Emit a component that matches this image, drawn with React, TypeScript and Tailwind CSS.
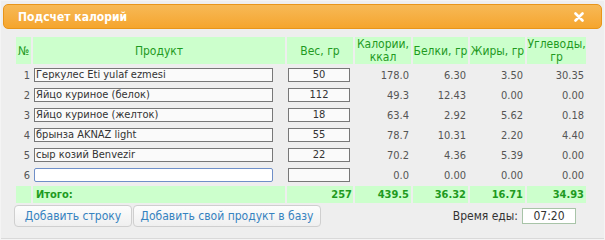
import React from 'react';

const rows = [
  { n: 1, name: 'Геркулес Eti yulaf ezmesi', w: '50', kcal: '178.0', p: '6.30', f: '3.50', c: '30.35' },
  { n: 2, name: 'Яйцо куриное (белок)', w: '112', kcal: '49.3', p: '12.43', f: '0.00', c: '0.00' },
  { n: 3, name: 'Яйцо куриное (желток)', w: '18', kcal: '63.4', p: '2.92', f: '5.62', c: '0.18' },
  { n: 4, name: 'брынза AKNAZ light', w: '55', kcal: '78.7', p: '10.31', f: '2.20', c: '4.40' },
  { n: 5, name: 'сыр козий Benvezir', w: '22', kcal: '70.2', p: '4.36', f: '5.39', c: '0.00' },
  { n: 6, name: '', w: '', kcal: '0.0', p: '0.00', f: '0.00', c: '0.00' },
];

const font = { fontFamily: '"DejaVu Sans", sans-serif', fontStretch: 'condensed' } as React.CSSProperties;

export default function App() {
  return (
    <div className="w-[605px] h-[240px] bg-[#f4f4f4] pt-[1px] overflow-hidden" style={font}>
      <div className="mx-[1px] h-[238px] border-b border-[#d9d9d9] bg-[#eeeeee] px-[2px] pt-[3px]">
        {/* title bar */}
        <div className="h-[25px] rounded-[5px] border border-[#e8951a] bg-gradient-to-b from-[#f7b955] to-[#f5a52c] flex items-center justify-between pl-[14px] pr-[17px]">
          <span className="text-white font-bold text-[12px] leading-none">Подсчет калорий</span>
          <svg width="10" height="10" viewBox="0 0 10 10">
            <path d="M1.5 1.5 L8.5 8.5 M8.5 1.5 L1.5 8.5" stroke="#fff" strokeWidth="2.6" strokeLinecap="round" />
          </svg>
        </div>

        <table className="ml-[11px] mt-[6px] border-separate border-spacing-[2px] text-[11px] leading-none">
          <thead>
            <tr className="h-[27px] text-[12px] text-[#1f9a1f] font-normal">
              <th className="w-[15px] bg-[#ccffcc] font-normal">№</th>
              <th className="w-[252px] bg-[#ccffcc] font-normal">Продукт</th>
              <th className="w-[66px] bg-[#ccffcc] font-normal">Вес, гр</th>
              <th className="w-[56px] bg-[#ccffcc] font-normal leading-[13px]">Калории,<br />ккал</th>
              <th className="w-[55px] bg-[#ccffcc] font-normal">Белки, гр</th>
              <th className="w-[55px] bg-[#ccffcc] font-normal">Жиры, гр</th>
              <th className="w-[59px] bg-[#ccffcc] font-normal leading-[13px]">Углеводы,<br />гр</th>
            </tr>
          </thead>
          <tbody className="text-[#555]">
            {rows.map((r) => (
              <tr key={r.n} className="h-[18px]">
                <td className="text-right pr-[1px]">{r.n}</td>
                <td className="pl-[1px]">
                  <div
                    className={
                      r.n === 6
                        ? 'w-[239px] h-[14px] border border-[#6f8fc8] rounded-[2px] bg-white'
                        : 'w-[239px] h-[14px] border border-[#777] bg-[#fafafa] text-[#333] pl-[1px] leading-[12px] whitespace-nowrap overflow-hidden'
                    }
                  >
                    {r.name}
                  </div>
                </td>
                <td className="pl-[1px]">
                  <div className="w-[62px] h-[14px] border border-[#777] bg-[#fafafa] text-[#333] text-center leading-[12px]">
                    {r.w}
                  </div>
                </td>
                <td className="text-right pr-[2px]">{r.kcal}</td>
                <td className="text-right pr-[2px]">{r.p}</td>
                <td className="text-right pr-[2px]">{r.f}</td>
                <td className="text-right pr-[2px]">{r.c}</td>
              </tr>
            ))}
            <tr className="h-[17px] text-[#1f9a1f] font-bold">
              <td className="bg-[#ccffcc]"></td>
              <td className="bg-[#ccffcc] pl-[3px]">Итого:</td>
              <td className="bg-[#ccffcc] text-right pr-[1px]">257</td>
              <td className="bg-[#ccffcc] text-right pr-[2px]">439.5</td>
              <td className="bg-[#ccffcc] text-right pr-[2px]">36.32</td>
              <td className="bg-[#ccffcc] text-right pr-[2px]">16.71</td>
              <td className="bg-[#ccffcc] text-right pr-[2px]">34.93</td>
            </tr>
          </tbody>
        </table>

        <div className="flex items-center ml-[11px] mr-[26px]">
          <button className="h-[22px] w-[118px] rounded-[4px] border border-[#cfcfcf] bg-gradient-to-b from-[#fdfdfd] to-[#efefef] text-[12px] text-[#3582c0]">
            Добавить строку
          </button>
          <button className="ml-[1px] h-[22px] w-[188px] rounded-[4px] border border-[#cfcfcf] bg-gradient-to-b from-[#fdfdfd] to-[#efefef] text-[12px] text-[#3582c0]">
            Добавить свой продукт в базу
          </button>
          <span className="ml-auto text-[12px] text-[#333]">Время еды:</span>
          <div className="ml-[4px] w-[54px] h-[16px] border border-[#a8c4a8] bg-white text-center text-[12px] text-[#333] leading-[14px]">
            07:20
          </div>
        </div>
      </div>
    </div>
  );
}
